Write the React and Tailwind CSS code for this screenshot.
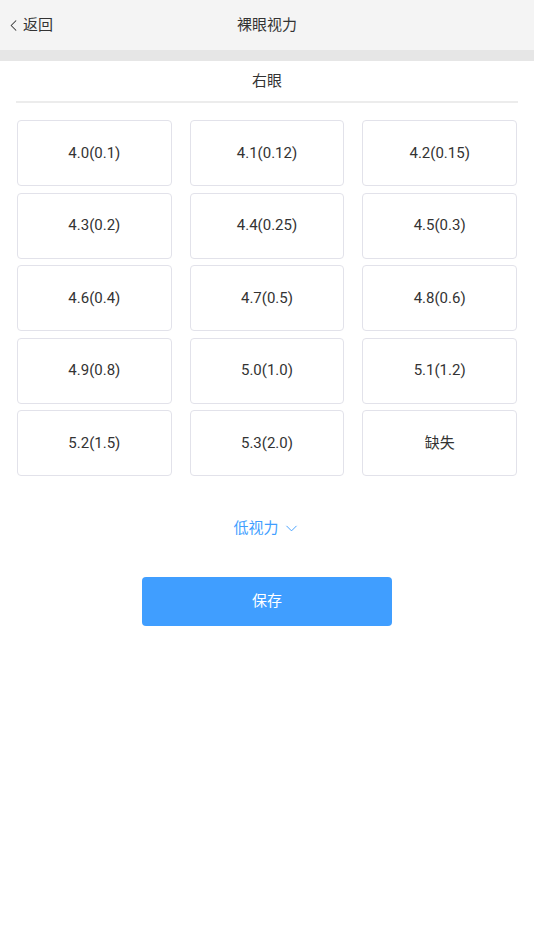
import { ChevronLeft, ChevronDown } from 'lucide-react';

const options = [
  '4.0(0.1)', '4.1(0.12)', '4.2(0.15)',
  '4.3(0.2)', '4.4(0.25)', '4.5(0.3)',
  '4.6(0.4)', '4.7(0.5)', '4.8(0.6)',
  '4.9(0.8)', '5.0(1.0)', '5.1(1.2)',
  '5.2(1.5)', '5.3(2.0)', '缺失',
];

export default function App() {
  return (
    <div
      className="min-h-[950px] w-[534px] bg-white text-[#333]"
      style={{ fontFamily: 'Roboto, "Noto Sans CJK SC", sans-serif' }}
    >
      <div className="grid h-[50px] grid-cols-3 items-center bg-[#f4f4f4]">
        <div className="flex items-center pl-[4px] text-[15px]">
          <ChevronLeft size={19} strokeWidth={1.3} />
          <span>返回</span>
        </div>
        <div className="text-center text-[15px]">裸眼视力</div>
        <div />
      </div>
      <div className="h-[11px] bg-[#e6e6e6]" />

      <div className="mx-[16px] flex h-[42px] items-center justify-center border-b-2 border-[#ececec] text-[15px]">
        右眼
      </div>

      <div className="mt-[17px] grid grid-cols-3 gap-x-[18px] gap-y-[6.5px] pl-[17px] pr-[17px]">
        {options.map((o) => (
          <button
            key={o}
            className="flex h-[66px] items-center justify-center rounded-[4px] border border-[#e2e2ea] bg-white text-[15px] text-[#333]"
          >
            {o}
          </button>
        ))}
      </div>

      <div className="mt-[41px] flex items-center justify-center text-[15px] text-[#409eff]">
        <span>低视力</span>
        <ChevronDown size={19} strokeWidth={1.2} className="ml-[3px]" />
      </div>

      <div className="mt-[37px] flex justify-center">
        <button className="h-[49px] w-[250px] rounded-[4px] bg-[#409eff] text-[15px] text-white">
          保存
        </button>
      </div>
    </div>
  );
}
